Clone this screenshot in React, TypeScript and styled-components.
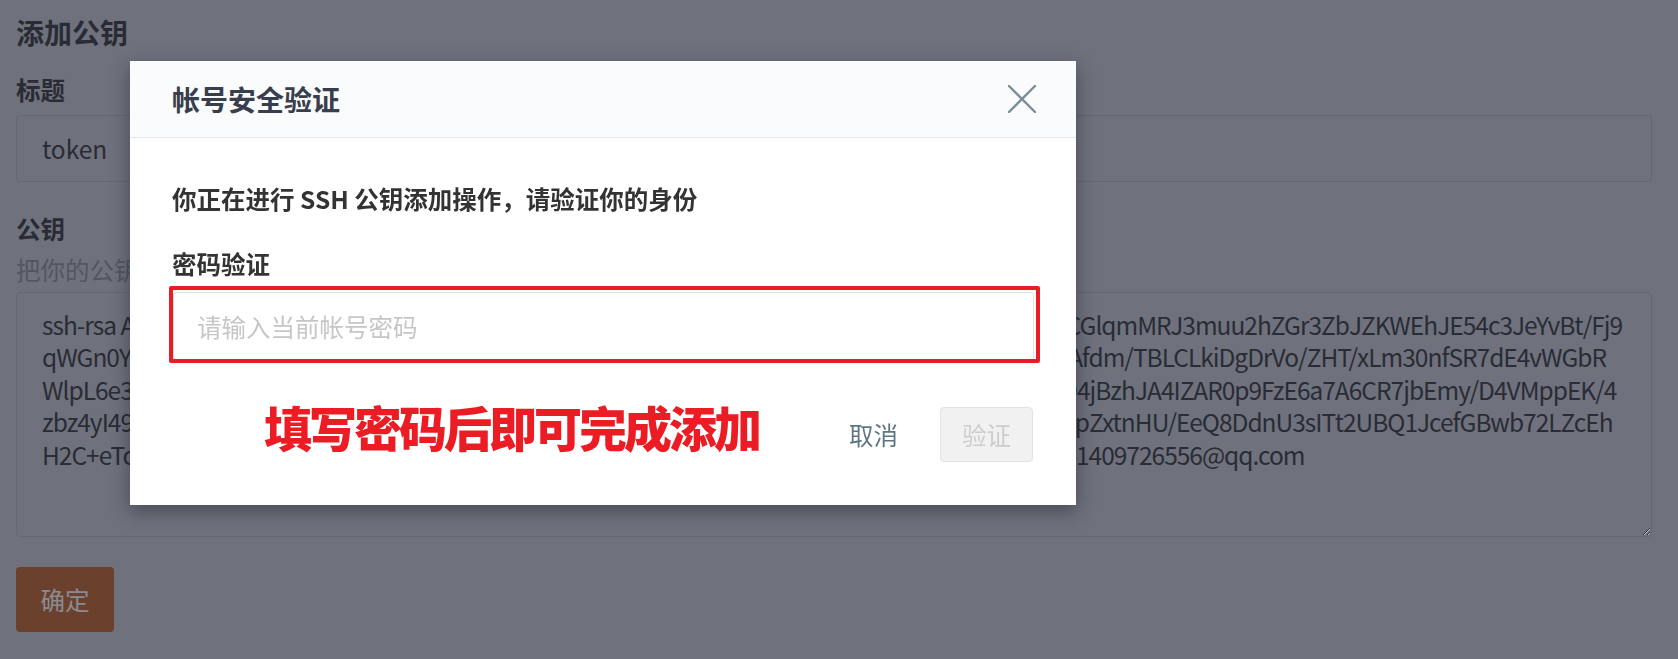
import React from "react";
import styled, { createGlobalStyle } from "styled-components";

const GlobalStyle = createGlobalStyle`
  html, body {
    margin: 0;
    padding: 0;
  }
  body {
    width: 1678px;
    height: 659px;
    overflow: hidden;
    background: #6f727d;
    font-family: "Noto Sans CJK SC", "Noto Sans", sans-serif;
  }
  * {
    box-sizing: border-box;
  }
`;

const Page = styled.main`
  display: flex;
  flex-direction: column;
  align-items: stretch;
  padding: 12px 26px 0 16px;
  color: #2a2c35;
`;

const Heading = styled.h1`
  margin: 0;
  font-size: 28px;
  line-height: 40px;
  font-weight: 700;
  color: #2a2c35;
`;

const FieldLabel = styled.label<{ $gap: number }>`
  display: block;
  margin-top: ${(p) => p.$gap}px;
  font-size: 24.5px;
  line-height: 36px;
  font-weight: 700;
  color: #2a2c35;
`;

const Hint = styled.div`
  margin-top: 5px;
  font-size: 24.5px;
  line-height: 36px;
  color: #53565f;
`;

const TextInput = styled.input`
  margin-top: 7px;
  height: 67px;
  padding: 0 25px;
  border: 1px solid #656873;
  border-radius: 4px;
  background: transparent;
  font-family: inherit;
  font-size: 24.5px;
  color: #2a2c35;
  outline: none;
`;

const KeyArea = styled.textarea`
  margin-top: 4px;
  height: 245px;
  padding: 16px 25px;
  border: 1px solid #656873;
  border-radius: 4px;
  background: transparent;
  font-family: inherit;
  font-size: 24.5px;
  line-height: 32.4px;
  letter-spacing: -1px;
  color: #2a2c35;
  white-space: pre;
  overflow: hidden;
  resize: vertical;
  outline: none;
`;

const SubmitButton = styled.button`
  align-self: flex-start;
  margin-top: 30px;
  width: 98px;
  height: 65px;
  border: none;
  border-radius: 4px;
  background: #6b412e;
  color: #8a8b90;
  font-family: inherit;
  font-size: 24.5px;
`;

const Backdrop = styled.div`
  position: fixed;
  inset: 0;
  padding: 61px 0 0 130px;
`;

const Dialog = styled.section`
  width: 946px;
  display: flex;
  flex-direction: column;
  background: #ffffff;
  box-shadow: 0 6px 18px rgba(20, 22, 30, 0.45);
`;

const DialogHeader = styled.header`
  height: 77px;
  display: flex;
  align-items: center;
  justify-content: space-between;
  padding: 0 40px 0 42px;
  background: #fafbfc;
  border-bottom: 1px solid #e3e7ea;
`;

const DialogTitle = styled.h2`
  margin: 0;
  font-size: 28px;
  font-weight: 700;
  color: #383e4c;
`;

const CloseButton = styled.button`
  width: 28px;
  height: 28px;
  padding: 0;
  border: none;
  background: none;
  display: flex;
  align-items: center;
  justify-content: center;
`;

const DialogBody = styled.div`
  display: flex;
  flex-direction: column;
  padding: 43px 42px 0 42px;
`;

const Prompt = styled.p`
  margin: 0;
  font-size: 24.5px;
  line-height: 36px;
  font-weight: 700;
  color: #333333;
`;

const FieldTitle = styled.div`
  margin-top: 29px;
  font-size: 24.5px;
  line-height: 36px;
  font-weight: 700;
  color: #333333;
`;

const InputFrame = styled.div`
  position: relative;
  margin-top: 10px;
  margin-left: 1px;
`;

const PasswordInput = styled.input`
  display: block;
  width: 100%;
  height: 68px;
  padding: 0 23px;
  border: 1px solid #dcdfe3;
  border-radius: 3px;
  background: #ffffff;
  font-family: inherit;
  font-size: 24.5px;
  color: #333333;
  outline: none;
  &::placeholder {
    color: #c6c6c6;
  }
`;

const RedMark = styled.span`
  position: absolute;
  left: -4px;
  right: -6px;
  top: -6px;
  bottom: -3px;
  border: 4px solid #ec1c24;
  border-radius: 2px;
  pointer-events: none;
`;

const DialogFooter = styled.footer`
  display: flex;
  align-items: center;
  padding: 47px 43px 43px 42px;
`;

const Annotation = styled.div`
  align-self: flex-start;
  margin: -5px 0 0 92px;
  font-size: 48px;
  line-height: 48px;
  font-weight: 900;
  letter-spacing: -3px;
  color: #ec1c24;
  white-space: nowrap;
`;

const Spacer = styled.div`
  flex: 1;
`;

const CancelButton = styled.button`
  width: 93px;
  height: 55px;
  margin-right: 20px;
  border: none;
  background: none;
  font-family: inherit;
  font-size: 24.5px;
  color: #5e7683;
`;

const VerifyButton = styled.button`
  width: 93px;
  height: 55px;
  border: 1px solid #e2e2e2;
  border-radius: 4px;
  background: #f1f1f1;
  font-family: inherit;
  font-size: 24.5px;
  color: #cdcdcd;
`;

const keyLines = [
  "ssh-rsa AAAAB3NzaC1yc2EAAAADAQABAAABgQDHk8mZ2vRtP1xWq7sLb9nJcQe4uYfTgK0aXpR2sLCGlqmMRJ3muu2hZGr3ZbJZKWEhJE54c3JeYvBt/Fj9",
  "qWGn0YhT3pQ8sK2vNwL5rJ9mXcB7eF1gYdU4aZ6iO0tHkS3nRqP8wV2xM5jL7cE9bG1fA4uDQw7NAfdm/TBLCLkiDgDrVo/ZHT/xLm30nfSR7dE4vWGbR",
  "WlpL6e3Rk9vX2mQ7tB4nP1sW8cL5hJ3gF6dY0zE2aU9iO4rT7yK1wN5qM8xV3bC6jH0fG2lD5Ty3Kb94jBzhJA4IZAR0p9FzE6a7A6CR7jbEmy/D4VMppEK/4",
  "zbz4yI49Xm2Kq7Wv3Rt8Ns1Lp6Jh4Gf9Dc0Bz5Yx2Vu7Tr3Qo8Mn1Lk6Ji4Hg9Fe0Dc5Ba2Zy7Hq4RmpZxtnHU/EeQ8DdnU3sITt2UBQ1JcefGBwb72LZcEh",
  "H2C+eTcLq3Wz8Yv1Ns6Pr4Mt9Kx2Jb7Hd5Gf0Ec3Da8Cb1Ba6Zy4Xw9Vu2Ts7Rq5Po0Nm3Gk8FjPq= 1409726556@qq.com",
];

const CloseIcon = () => (
  <svg width="28" height="28" viewBox="0 0 28 28" aria-hidden="true">
    <path d="M1 1 L27 27 M27 1 L1 27" stroke="#7c8c96" strokeWidth="2.4" strokeLinecap="round" />
  </svg>
);

export default function App() {
  return (
    <>
      <GlobalStyle />
      <Page>
        <Heading>添加公钥</Heading>
        <FieldLabel $gap={20}>标题</FieldLabel>
        <TextInput defaultValue="token" />
        <FieldLabel $gap={29}>公钥</FieldLabel>
        <Hint>把你的公钥</Hint>
        <KeyArea readOnly value={keyLines.join("\n")} />
        <SubmitButton>确定</SubmitButton>
      </Page>
      <Backdrop>
        <Dialog role="dialog" aria-label="帐号安全验证">
          <DialogHeader>
            <DialogTitle>帐号安全验证</DialogTitle>
            <CloseButton aria-label="关闭">
              <CloseIcon />
            </CloseButton>
          </DialogHeader>
          <DialogBody>
            <Prompt>你正在进行 SSH 公钥添加操作，请验证你的身份</Prompt>
            <FieldTitle>密码验证</FieldTitle>
            <InputFrame>
              <PasswordInput type="password" placeholder="请输入当前帐号密码" />
              <RedMark />
            </InputFrame>
          </DialogBody>
          <DialogFooter>
            <Annotation>填写密码后即可完成添加</Annotation>
            <Spacer />
            <CancelButton>取消</CancelButton>
            <VerifyButton disabled>验证</VerifyButton>
          </DialogFooter>
        </Dialog>
      </Backdrop>
    </>
  );
}
